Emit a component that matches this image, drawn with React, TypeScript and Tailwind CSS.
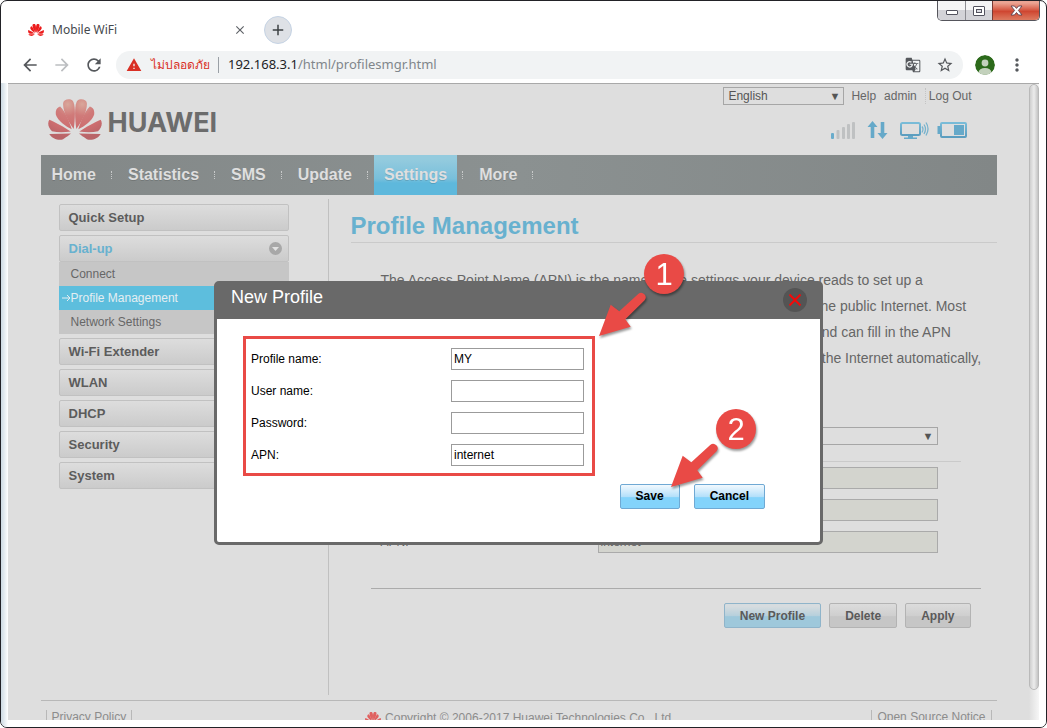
import type { ReactNode } from 'react'

import { MdAdd, MdArrowBack, MdArrowForward, MdClose, MdGTranslate, MdMoreVert, MdRefresh, MdStarBorder, MdWarning } from 'react-icons/md'

const navItems = ['Home', 'Statistics', 'SMS', 'Update', 'Settings', 'More']
const dialUpItems = ['Connect', 'Profile Management', 'Network Settings']
const menuItems = ['Wi-Fi Extender', 'WLAN', 'DHCP', 'Security', 'System']

const profileFields = [
  { id: 'current-user', label: 'User name:', value: '' },
  { id: 'current-password', label: 'Password:', value: '' },
  { id: 'current-apn', label: 'APN:', value: 'internet' },
]

const newProfileFields = [
  { id: 'new-name', label: 'Profile name:', value: 'MY', type: 'text' },
  { id: 'new-user', label: 'User name:', value: '', type: 'text' },
  { id: 'new-password', label: 'Password:', value: '', type: 'password' },
  { id: 'new-apn', label: 'APN:', value: 'internet', type: 'text' },
]

const petals = [
  'M110 117C106 90 103 45 113 31C122 24 140 26 142 38C144 62 126 95 110 117Z',
  'M116 118C122 98 136 62 151 49C162 52 166 62 164 74C158 92 134 110 116 118Z',
  'M119 125C138 112 166 96 184 89C190 99 188 112 176 124C158 128 138 127 119 125Z',
  'M118 131L184 132C176 146 156 153 142 148C132 142 124 136 118 131Z',
]

function HuaweiFlower({ className }: { className: string }) {
  return (
    <svg viewBox="24 26 164 125" className={className} aria-hidden="true">
      <defs>
        <radialGradient id="petal" gradientUnits="userSpaceOnUse" cx="128" cy="42" r="100">
          <stop offset="0" stopColor="#d9a79b" />
          <stop offset="0.35" stopColor="#d07a79" />
          <stop offset="0.7" stopColor="#cd6e70" />
          <stop offset="1" stopColor="#b96468" />
        </radialGradient>
      </defs>
      {petals.map((d) => (
        <path key={d} d={d} />
      ))}
      <g transform="translate(212 0) scale(-1 1)">
        {petals.map((d) => (
          <path key={d} d={d} />
        ))}
      </g>
    </svg>
  )
}

function WindowControls() {
  return (
    <div className="absolute right-[6px] top-0 flex h-5 overflow-hidden rounded-b-[5px] border border-t-0 border-[#55555c]">
      <button type="button" aria-label="Minimize" className="flex w-7 items-center justify-center border-r border-[#8c8c92] bg-linear-to-b from-[#f4f4f5] from-45% to-[#d3d3d8] to-50%">
        <svg width="12" height="6" viewBox="0 0 12 6" className="mt-1" aria-hidden="true">
          <rect x="0.5" y="0.5" width="11" height="4" rx="0.5" fill="#fff" stroke="#53535f" />
        </svg>
      </button>
      <button type="button" aria-label="Maximize" className="flex w-[27px] items-center justify-center border-r border-[#7a3a34] bg-linear-to-b from-[#f4f4f5] from-45% to-[#d3d3d8] to-50%">
        <svg width="12" height="10" viewBox="0 0 12 10" aria-hidden="true">
          <rect x="0.5" y="0.5" width="11" height="9" rx="0.5" fill="#fff" stroke="#53535f" />
          <rect x="3.5" y="3.5" width="5" height="3" fill="#dcdce2" stroke="#53535f" />
        </svg>
      </button>
      <button type="button" aria-label="Close" className="flex w-[46px] items-center justify-center bg-linear-to-b from-[#eba493] from-10% via-[#cf4631] via-55% to-[#dc7a60]">
        <svg width="13" height="11" viewBox="0 0 13 11" aria-hidden="true">
          <path d="M1 1h3.400l2.100 2.400L8.600 1H12L8.400 5.400 12 10H8.600L6.500 7.500 4.400 10H1l3.600-4.600z" fill="#fff" stroke="#5b4450" strokeWidth="0.9" />
        </svg>
      </button>
    </div>
  )
}

function BrowserChrome() {
  return (
    <div className="font-['Noto_Sans','Open_Sans',sans-serif]">
      <div className="flex h-[49px] items-center pl-[27px] pt-[9px]">
        <HuaweiFlower className="h-4 w-4 fill-[#ec1c1c]" />
        <span className="ml-2 w-[181px] text-xs text-[#45494d]">Mobile WiFi</span>
        <button type="button" aria-label="Close tab" className="text-[#5f6368]">
          <MdClose className="h-[14px] w-[14px]" />
        </button>
        <button type="button" aria-label="New tab" className="ml-[17px] flex h-7 w-7 items-center justify-center rounded-full border border-[#c5d3e4] bg-[#dee1e6] text-[#3c4043]">
          <MdAdd className="h-[18px] w-[18px]" />
        </button>
      </div>
      <div className="flex h-[33px] items-start pl-[19px] pr-[19px] pt-px text-[#55585c]">
        <button type="button" aria-label="Back" className="mt-1">
          <MdArrowBack className="h-5 w-5" />
        </button>
        <button type="button" aria-label="Forward" className="ml-3 mt-1 text-[#bcbec1]">
          <MdArrowForward className="h-5 w-5" />
        </button>
        <button type="button" aria-label="Reload" className="ml-3 mt-1">
          <MdRefresh className="h-5 w-5" />
        </button>
        <div className="ml-3 flex h-7 flex-1 items-center rounded-full bg-[#f1f3f4] pl-[10px] pr-[9px] text-[13px]">
          <MdWarning className="h-4 w-4 text-[#d93025]" aria-hidden="true" />
          <span className="ml-[9px] w-[63px] whitespace-nowrap text-xs text-[#d93025]">ไม่ปลอดภัย</span>
          <span className="ml-1 h-4 border-l border-[#9aa0a6]" />
          <span className="ml-[9px] flex-1 text-[#80868b]">
            <span className="text-[#202124]">192.168.3.1</span>/html/profilesmgr.html
          </span>
          <button type="button" aria-label="Translate this page">
            <MdGTranslate className="h-4 w-4" />
          </button>
          <button type="button" aria-label="Bookmark this page" className="ml-[15px]">
            <MdStarBorder className="h-[18px] w-[18px]" />
          </button>
        </div>
        <button type="button" aria-label="Profile" className="ml-3 mt-1">
          <svg width="20" height="20" viewBox="0 0 20 20" className="rounded-full" aria-hidden="true">
            <circle cx="10" cy="10" r="10" fill="#2c6a1b" />
            <circle cx="10" cy="8" r="3.400" fill="#c3d1bc" />
            <ellipse cx="10" cy="17.500" rx="6.500" ry="4.500" fill="#c3d1bc" />
          </svg>
        </button>
        <button type="button" aria-label="Menu" className="ml-3 mt-1">
          <MdMoreVert className="h-5 w-5" />
        </button>
      </div>
    </div>
  )
}

function StatusIcons() {
  return (
    <svg width="137" height="19" viewBox="0 0 137 19" aria-hidden="true">
      <defs>
        <linearGradient id="statusBlue" x1="0" y1="0" x2="0" y2="1">
          <stop offset="0" stopColor="#79bcd8" />
          <stop offset="1" stopColor="#5b9dbf" />
        </linearGradient>
      </defs>
      <rect x="0" y="12" width="3" height="6" rx="1" fill="#6aaccb" />
      <rect x="5.500" y="9" width="3" height="9" rx="1" fill="#bfc1c2" />
      <rect x="11" y="6" width="3" height="12" rx="1" fill="#bfc1c2" />
      <rect x="16" y="3" width="3" height="15" rx="1" fill="#bfc1c2" />
      <rect x="21" y="1" width="3" height="17" rx="1" fill="#bfc1c2" />
      <path d="M41.500 0l5 6h-3.200v11h-3.600V6h-3.200z" fill="#66a9c9" />
      <path d="M51.500 18l5-6h-3.200V1h-3.600v11h-3.200z" fill="#66a9c9" />
      <rect x="70" y="2" width="19" height="12" rx="1.500" fill="none" stroke="url(#statusBlue)" strokeWidth="2" />
      <path d="M77 15h5v1.500h4V18H73v-1.500h4z" fill="#66a9c9" />
      <path d="M91 5.500q2 2.500 0 6M93 3.500q3 4.500 0 9.500M95 1.500q4 6 0 13" fill="none" stroke="#79b3cd" strokeWidth="1.300" />
      <rect x="110" y="2" width="25" height="14" rx="1" fill="none" stroke="url(#statusBlue)" strokeWidth="2" />
      <rect x="106.500" y="5" width="3" height="8" fill="#66a9c9" />
      <rect x="123" y="4" width="10" height="10" fill="#66a9c9" />
    </svg>
  )
}

function MenuBar({ children, active }: { children: ReactNode; active?: boolean }) {
  return (
    <a
      href="#"
      className={`flex h-[27px] items-center justify-between rounded-[2px] border border-[#c1c1c1] bg-linear-to-b from-[#dddddd] to-[#cbcbcb] pl-[9px] pr-[6px] text-[13px] font-bold ${active ? 'text-[#68b1cf]' : 'text-[#5c5c5c]'}`}
    >
      {children}
      {active && (
        <svg width="13" height="13" viewBox="0 0 13 13" aria-hidden="true">
          <circle cx="6.500" cy="6.500" r="6.500" fill="#a8a8a8" />
          <path d="M3 5h7L6.500 9z" fill="#e2e2e2" />
        </svg>
      )}
    </a>
  )
}

function Sidebar() {
  return (
    <aside className="w-[287px] shrink-0 pl-[18px] pr-[39px] pt-[9px]">
      <div className="flex flex-col gap-1">
        <MenuBar>Quick Setup</MenuBar>
        <div>
          <MenuBar active>Dial-up</MenuBar>
          <ul className="bg-[#c6c6c6] text-xs text-[#666]">
            {dialUpItems.map((item) =>
              item === 'Profile Management' ? (
                <li key={item} className="flex h-6 items-center bg-[#5dbedd] pl-[3px] text-[#e4eef2]">
                  <svg width="9" height="8" viewBox="0 0 9 8" aria-hidden="true">
                    <path d="M0 4h8M5 1l3 3-3 3" fill="none" stroke="currentColor" />
                  </svg>
                  <a href="#">{item}</a>
                </li>
              ) : (
                <li key={item} className="flex h-6 items-center pl-3">
                  <a href="#">{item}</a>
                </li>
              ),
            )}
          </ul>
        </div>
        {menuItems.map((item) => (
          <MenuBar key={item}>{item}</MenuBar>
        ))}
      </div>
    </aside>
  )
}

function SelectBox({ id, value, className }: { id: string; value: string; className: string }) {
  return (
    <div className={`relative ${className}`}>
      <select id={id} className="h-[18px] w-full appearance-none border border-[#a6a6a6] bg-[#dedede] pl-1 text-xs leading-4 text-[#555]">
        <option>{value}</option>
      </select>
      <span className="pointer-events-none absolute right-1 top-0 text-[11px] leading-[18px] text-[#555]">▼</span>
    </div>
  )
}

function PageHeader() {
  return (
    <header className="flex h-[71px] justify-between pl-[7px] pr-[25px] text-xs text-[#666]">
      <a href="#" className="flex items-center">
        <HuaweiFlower className="w-[54px] fill-[url(#petal)]" />
        <span className="ml-[6px] mt-[6px] font-['Inter',sans-serif] text-[27px] font-bold leading-8 text-[#6c6c6c]">HUAWEI</span>
      </a>
      <div className="flex flex-col items-end pt-[3px]">
        <div className="flex items-center">
          <label htmlFor="language" className="sr-only">Language</label>
          <SelectBox id="language" value="English" className="w-[121px]" />
          <a href="#" className="ml-[7px]">Help</a>
          <a href="#" className="ml-2">admin</a>
          <a href="#" className="ml-2 border-l border-dotted border-[#c4c4c4] pl-[3px]">Log Out</a>
        </div>
        <div className="mr-1 mt-4">
          <StatusIcons />
        </div>
      </div>
    </header>
  )
}

function NavBar() {
  return (
    <nav className="h-10 bg-linear-to-r from-[#838888] via-[#8b9191] to-[#828787] text-base font-bold text-[#dfdfdf]">
      <ul className="flex h-full pl-px">
        {navItems.map((item) => (
          <li key={item} className="flex items-center">
            <a
              href="#"
              className={`flex h-full items-center px-[10px] text-shadow-2xs ${item === 'Settings' ? 'bg-linear-to-b from-[#94cbde] from-10% via-[#78bfdb] via-60% to-[#5eb8dc] to-70%' : ''}`}
            >
              {item}
            </a>
            <span className="ml-[5px] mr-[6px] h-2 border-l border-dotted border-[#c8caca]" />
          </li>
        ))}
      </ul>
    </nav>
  )
}

function Button({ children, blue }: { children: string; blue?: boolean }) {
  return (
    <button
      type="button"
      className={`h-[25px] rounded-[2px] border px-[15px] text-xs font-bold text-[#5a5a5a] ${blue ? 'border-[#8fb4ca] bg-linear-to-b from-[#d6dcdf] from-10% via-[#b7d0dc] via-50% to-[#9ec8db] to-55%' : 'border-[#b3b3b3] bg-linear-to-b from-[#dcdcdc] via-[#cfcfcf] via-50% to-[#c6c6c6] to-55%'}`}
    >
      {children}
    </button>
  )
}

function ProfileSection() {
  return (
    <main className="mt-1 h-[496px] flex-1 border-l border-[#c0c0c0] pl-[22px] pt-[13px]">
      <h1 className="border-b border-[#cacaca] pb-[2px] text-2xl font-bold leading-7 text-[#68b1cf]">Profile Management</h1>
      <p className="mt-6 whitespace-nowrap pl-[30px] text-sm leading-[26px] text-[#666]">
        The Access Point Name (APN) is the name of the settings your device reads to set up a<br />
        connection to the gateway between your carrier's cellular network and the public Internet. Most<br />
        modern devices automatically recognize the carrier of your SIM cards and can fill in the APN<br />
        settings for you. If you do find that your device is not able to connect to the Internet automatically,<br />
        check the profile settings below.
      </p>
      <div className="mt-[30px] pl-5 pr-4 text-xs text-[#666]">
        <div className="mr-5 flex items-center border-b border-[#cacaca] pb-4 pl-[10px]">
          <label htmlFor="current-profile" className="w-[217px]">Profile name:</label>
          <SelectBox id="current-profile" value="internet" className="w-[340px]" />
        </div>
        <div className="flex flex-col gap-[10px] pl-[10px] pt-[5px]">
          {profileFields.map((field) => (
            <div key={field.id} className="flex items-center">
              <label htmlFor={field.id} className="w-[217px]">{field.label}</label>
              <input id={field.id} disabled defaultValue={field.value} className="h-[22px] w-[340px] border border-[#aaaaaa] bg-[#d3d4ce] px-[2px]" />
            </div>
          ))}
        </div>
        <div className="mt-[35px] flex justify-end gap-2 border-t border-[#ababab] pr-[10px] pt-[14px]">
          <Button blue>New Profile</Button>
          <Button>Delete</Button>
          <Button>Apply</Button>
        </div>
      </div>
    </main>
  )
}

function PageFooter() {
  return (
    <footer className="mt-[5px] flex justify-between border-t border-[#b8b8b8] px-[5px] pt-[9px] text-xs leading-[14px] text-[#8c8c8c]">
      <a href="#" className="border-x border-[#b8b8b8] px-[5px]">Privacy Policy</a>
      <span className="flex items-center gap-1 pl-9">
        <HuaweiFlower className="h-4 w-4 fill-[#e0605f]" />
        Copyright © 2006-2017 Huawei Technologies Co., Ltd.
      </span>
      <a href="#" className="border-x border-[#b8b8b8] px-[5px]">Open Source Notice</a>
    </footer>
  )
}

/* numbered badge with an arrow that points down and to the left */
function Callout({ step, cy, className }: { step: number; cy: number; className: string }) {
  return (
    <svg width="96" height="92" viewBox="0 0 96 92" className={`pointer-events-none absolute drop-shadow-[1px_2px_1px_rgba(0,0,0,0.4)] ${className}`} aria-hidden="true">
      <path d="M5 84L16.700 52.700L25.300 59.300L44.200 42A4.500 4.500 0 0 1 50.400 48.500L31.300 67.300L36.700 74.700Z" fill="#e94a46" />
      <circle cx="70" cy={cy} r="20" fill="#e94a46" />
      <text x="70" y={cy + 11} textAnchor="middle" fontSize="31" fill="#fff">
        {step}
      </text>
    </svg>
  )
}

function NewProfileDialog() {
  return (
    <div role="dialog" aria-labelledby="dialog-title" className="relative w-[609px] self-start rounded-[5px] border-[3px] border-[#696969] bg-white text-xs text-black">
      <div className="flex h-[35px] items-start justify-between bg-[#696969] pl-[14px] pr-[13px]">
        <h2 id="dialog-title" className="text-lg leading-[26px] text-white">New Profile</h2>
        <button type="button" aria-label="Close dialog" className="mt-1 flex h-6 w-6 items-center justify-center rounded-full bg-[#545454]">
          <svg width="12" height="12" viewBox="0 0 12 12" aria-hidden="true">
            <path d="M0.500 0.500l11 11M11.500 0.500l-11 11" stroke="#f40a0a" strokeWidth="2" />
          </svg>
        </button>
      </div>
      <form className="pb-[33px] pl-[26px] pr-[55px] pt-[17px]">
        <div className="flex w-[352px] flex-col gap-[10px] border-[3px] border-[#e94a46] pb-[7px] pl-[5px] pr-2 pt-[9px]">
          {newProfileFields.map((field) => (
            <div key={field.id} className="flex items-center justify-between">
              <label htmlFor={field.id}>{field.label}</label>
              <input id={field.id} type={field.type} defaultValue={field.value} className="h-[22px] w-[133px] border border-[#9b9b9b] bg-white px-[2px]" />
            </div>
          ))}
        </div>
        <div className="mt-2 flex justify-end gap-[14px]">
          {['Save', 'Cancel'].map((label) => (
            <button key={label} type="button" className="h-[25px] rounded-[2px] border border-[#6fa9d4] bg-linear-to-b from-[#f2f9fe] via-[#b4e0fa] via-50% to-[#83d3fb] to-55% px-[15px] pb-px font-bold">
              {label}
            </button>
          ))}
        </div>
      </form>
      <Callout step={1} cy={22} className="left-[377px] top-[-32px]" />
      <Callout step={2} cy={26} className="left-[449px] top-[119px]" />
    </div>
  )
}

export default function App() {
  return (
    <div className="h-screen bg-white">
      <div className="relative flex h-full flex-col overflow-hidden rounded-[7px] border border-[#222227] bg-white font-['Liberation_Sans',Arial,sans-serif]">
        <WindowControls />
        <BrowserChrome />
        <div className="flex min-h-0 flex-1 bg-linear-to-r from-[#cddae3] to-white to-[7px] pb-[7px] pl-[7px] pr-[7px]">
          <div className="relative min-w-0 flex-1 overflow-hidden border-t border-[#a9a9a9] bg-[#dedede]">
            <div className="mx-auto max-w-[956px]">
              <PageHeader />
              <NavBar />
              <div className="flex">
                <Sidebar />
                <ProfileSection />
              </div>
              <PageFooter />
            </div>
            <div className="absolute inset-0 flex justify-center pt-[197px]">
              <NewProfileDialog />
            </div>
          </div>
          <div className="flex w-[10px] flex-col border-t border-[#a9a9a9] bg-linear-to-r from-[#dedede] to-[#f6f6f6] pb-[30px]">
            <div className="flex-1 rounded-full border border-[#b9b9b9] bg-linear-to-r from-[#cfcfcf] via-[#ececec] to-[#c4c4c4]" />
          </div>
        </div>
      </div>
    </div>
  )
}
